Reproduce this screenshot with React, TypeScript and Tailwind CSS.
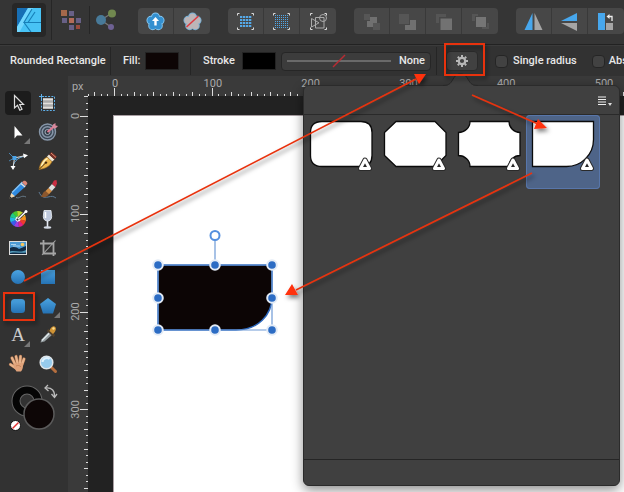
import type { ReactNode } from "react"

const STEP = 97.8
const ticks = Array.from({ length: 110 }, (_, i) => i - 5)
const labels = [0, 100, 200, 300, 400, 500]

const tickLength = (n: number) => (n % 15 === 0 ? 8 : n % 3 === 0 ? 4 : 2)
const tickPos = (n: number, zero: number) => Math.round(zero + (n * STEP) / 15) + 0.5

function Icon({ children }: { children: ReactNode }) {
  return (
    <svg className="h-6 w-[26px]" viewBox="0 0 26 24" fill="none" aria-hidden="true">
      {children}
    </svg>
  )
}

const corner = <path d="M25 18v6h-6z" fill="#777" />

const wheel = ["#f7e03b", "#f7931e", "#ef3b2d", "#e0218a", "#9b3fe0", "#3b5bea", "#22b5e8", "#1fc98a", "#46c832", "#b5dc2e"]

function wedge(i: number) {
  const a = ((i * 36 - 60) * Math.PI) / 180
  const b = (((i + 1) * 36 - 58) * Math.PI) / 180
  return `M13 12L${13 + 8 * Math.cos(a)} ${12 + 8 * Math.sin(a)}A8 8 0 0 1 ${13 + 8 * Math.cos(b)} ${12 + 8 * Math.sin(b)}z`
}

const tools: { name: string; icon: ReactNode }[] = [
  {
    name: "Move Tool",
    icon: <path d="M9.500 4.500v12.500l3-2.700 2.300 5 2.200-1-2.300-4.800h3.800z" fill="#1c1c1c" stroke="#ddd" strokeWidth="1.200" />,
  },
  {
    name: "Artboard Tool",
    icon: (
      <>
        <rect x="6.500" y="5.500" width="13" height="14" stroke="#5fb0ea" strokeDasharray="2 1.300" />
        <path d="M4 5.500h5M6.500 3v5" stroke="#5fb0ea" />
        <rect x="8" y="7" width="10" height="11" fill="#aaa" />
        <path d="M8 8.500h10M8 12.500h10M8 16.500h10" stroke="#e3dfda" strokeWidth="1.500" />
      </>
    ),
  },
  {
    name: "Node Tool",
    icon: (
      <>
        <path d="M9.500 6v12.500l2.500-3h5.500z" fill="#fff" />
        {corner}
      </>
    ),
  },
  {
    name: "Point Transform Tool",
    icon: (
      <>
        <circle cx="12.500" cy="12" r="8" fill="#3a4654" stroke="#8796a8" strokeWidth="1.400" />
        <circle cx="12.500" cy="12" r="5.300" stroke="#8796a8" strokeWidth="1.600" />
        <circle cx="12.500" cy="12" r="2.500" fill="#2c333c" stroke="#a3afbd" />
        <path d="M12.500 12l7-6" stroke="#e07a92" strokeWidth="2" />
        <path d="M17 8l1-3.500 2.500-1.500v2.500l2.500.5-2.500 2.500z" fill="#d9899c" />
      </>
    ),
  },
  {
    name: "Corner Tool",
    icon: (
      <>
        <path d="M9 9L4 4M9 9L4 12" stroke="#4b83ad" />
        <path d="M8 20c-.500-6 4-12 13-13" stroke="#5ea7dc" />
        <path d="M9.500 9l11-2.500M9.500 9L8 19" stroke="#ddd" />
        <rect x="7.500" y="7" width="4" height="4" fill="#4aa3e8" />
        <path d="M18 4.500l5 1.700-4 3zM5.500 17h5l-2.500 4z" fill="#fff" />
      </>
    ),
  },
  {
    name: "Pen Tool",
    icon: (
      <>
        <path d="M4 20.500C5 15 7 11 12 8l5 4.500c-2 4.500-6 7-13 8z" fill="#edb850" stroke="#a9711f" strokeWidth=".6" />
        <path d="M6.500 17C8 13 10 10.500 12.500 9.500" stroke="#fff0b8" strokeWidth="1.500" />
        <path d="M4.500 20l6-6" stroke="#42290c" />
        <circle cx="11" cy="13.600" r="1.200" fill="#42290c" />
        <path d="M12 7.500l2-2 5.500 5-2.300 2z" fill="#eee5d3" />
        <path d="M14 5.500L16.500 3l5.500 4.500-2.500 3z" fill="#772f25" />
        <path d="M16 4l5 4.500" stroke="#db8e75" />
      </>
    ),
  },
  {
    name: "Pencil Tool",
    icon: (
      <>
        <path d="M11 19.500c4 1.500 5-3 10-.5" stroke="#687b89" />
        <path d="M5 20l1.500-5L17 4.500l4 3.500-11 10z" fill="#2f8ae0" />
        <path d="M7 14.500L17.500 4" stroke="#83c5fa" strokeWidth="1.400" />
        <path d="M17 4.500l1.700-1.700c1.500-.8 4.300 1.500 3.500 3.200L20.500 8z" fill="#dc8878" />
        <path d="M16 5.500l4 3.500" stroke="#e8e4dc" strokeWidth="1.300" />
        <path d="M4.500 20.500l1.800-5.500 3.700 3.200z" fill="#f2d6ad" />
        <path d="M4.500 20.500l.700-2 1.300 1.200z" fill="#222" />
      </>
    ),
  },
  {
    name: "Vector Brush Tool",
    icon: (
      <>
        <path d="M4 14c2 5 5 6 9 5s5-1 8 1" stroke="#607b94" />
        <path d="M5.500 18.500c2 0 2-5 5-5.500l3.500 3c-1 3-5 4-8.500 2.500z" fill="#8c572d" />
        <path d="M10.500 13l3-3 3.500 3-3 3.200z" fill="#d08b42" />
        <path d="M13.500 10l3.500-4 3.500 3-3.700 4z" fill="#ddd" />
        <path d="M17 6l2-3.500 2.500-.5.500 3.500-1.500 3.500z" fill="#c92d42" />
      </>
    ),
  },
  {
    name: "Fill Tool",
    icon: (
      <>
        {wheel.map((c, i) => (
          <path key={c} d={wedge(i)} fill={c} />
        ))}
        <circle cx="13" cy="12" r="2.500" fill="#eee" />
        <path d="M13 12l8-7.500" stroke="#333" strokeWidth="3" />
        <path d="M12 13l9-8.500" stroke="#fff" strokeWidth="1.400" />
        <circle cx="12.500" cy="12.500" r="1.500" fill="#333" stroke="#fff" />
        <circle cx="21" cy="4.500" r="1.500" fill="#fff" />
      </>
    ),
  },
  {
    name: "Transparency Tool",
    icon: (
      <>
        <path d="M9 3.500h7l.700 6c0 3-2 4.500-4.200 4.500s-4.200-1.500-4.200-4.500z" fill="#bfc9dc" stroke="#eef2f8" strokeWidth=".8" />
        <path d="M10.500 5v6" stroke="#fff" strokeWidth="1.500" />
        <path d="M12.500 14v6" stroke="#e6ebf3" strokeWidth="1.600" />
        <ellipse cx="12.500" cy="20.500" rx="3.800" ry="1.200" fill="#d4dae5" />
      </>
    ),
  },
  {
    name: "Place Image Tool",
    icon: (
      <>
        <rect x="4.500" y="5.500" width="17" height="13" fill="#4c9bd6" stroke="#ddd" />
        <path d="M5 12c3-2 7-1 9 1l7-3v8H5z" fill="#102b46" />
        <path d="M5 15.500c5-1.500 10 2 16-1.500v2.500c-6 1-9-1-16 .5z" fill="#519aba" />
        <circle cx="17.500" cy="8.500" r="1.800" fill="#f7c65a" />
        <path d="M6 8.500h5M8 10h7" stroke="#a8d3ef" />
      </>
    ),
  },
  {
    name: "Crop Tool",
    icon: (
      <>
        <path d="M8.500 4v13.500H21M5 7.500h13.500V20" stroke="#a5a5a5" strokeWidth="1.800" />
        <path d="M20.500 4.500L7 19" stroke="#a5a5a5" strokeWidth="1.100" />
      </>
    ),
  },
  { name: "Ellipse Tool", icon: <circle cx="13" cy="12" r="7" fill="url(#blue)" /> },
  { name: "Rectangle Tool", icon: <rect x="6" y="5" width="14" height="14" fill="url(#blue)" /> },
  { name: "Rounded Rectangle Tool", icon: <rect x="6" y="5" width="14" height="14" rx="3.500" fill="url(#blue)" /> },
  {
    name: "Pentagon Tool",
    icon: (
      <>
        <path d="M13 4l8 6-3 9.500H8L5 10z" fill="url(#blue)" />
        {corner}
      </>
    ),
  },
  {
    name: "Artistic Text Tool",
    icon: (
      <>
        <text x="13" y="18" textAnchor="middle" fontSize="19" fontFamily="'Liberation Serif', serif" fill="#ccc">
          A
        </text>
        {corner}
      </>
    ),
  },
  {
    name: "Colour Picker Tool",
    icon: (
      <>
        <path d="M5.500 19.500l1-3 7.500-8 3.500 3-8 7z" fill="#939b9e" />
        <path d="M7 17.500l7.500-7.500" stroke="#e5ecef" strokeWidth="1.300" />
        <path d="M12.500 7l7 6" stroke="#50402d" strokeWidth="2.500" />
        <path d="M14.500 8c.500-3 3-5.500 5-4.500 2.500 1 1.500 5-1.500 7.500z" fill="#cf9335" />
        <circle cx="18.500" cy="5.500" r="1.200" fill="#ffe091" />
      </>
    ),
  },
  {
    name: "View Tool",
    icon: (
      <>
        <g stroke="#9e6846" strokeWidth="3.300" strokeLinecap="round">
          <path d="M10 12L7 6M12.500 11L11 4.500M15 11l.5-6.500M17 12.500l2-5.500M10 15.500l-4.500-3" />
        </g>
        <g stroke="#e9b48c" strokeWidth="2.300" strokeLinecap="round">
          <path d="M10 12L7 6M12.500 11L11 4.500M15 11l.5-6.500M17 12.500l2-5.500M10 15.500l-4.500-3" />
        </g>
        <path d="M8.500 11.500l9.500-.5c.500 4-.5 6.500-2 8.500h-4.500c-1-2-3-3-3-8z" fill="#dfa27a" />
        <path d="M11 14c2-1 4-.5 5 1" stroke="#b8774f" strokeWidth=".7" />
      </>
    ),
  },
  {
    name: "Zoom Tool",
    icon: (
      <>
        <path d="M16 15l4.500 4.500" stroke="#b56e3e" strokeWidth="3" strokeLinecap="round" />
        <circle cx="11.500" cy="10.500" r="6.300" fill="#96cbed" stroke="#e0e6ea" strokeWidth="1.500" />
        <path d="M7.500 10c.500-4 5-5 7-3" stroke="#def2ff" strokeWidth="2" />
      </>
    ),
  },
]

const snap = <path d="M4.500 6.500v-2h2M18.500 4.500h2v2M20.500 18.500v2h-2M6.500 20.500h-2v-2" stroke="#ddd" />

const petals = [0, 1, 2, 3, 4].map((i) => {
  const a = ((i * 72 - 90) * Math.PI) / 180
  return { x: 12.5 + 4.8 * Math.cos(a), y: 12.8 + 4.8 * Math.sin(a) }
})

function Flower({ fill, stroke }: { fill: string; stroke: string }) {
  return (
    <>
      {petals.map((p, i) => (
        <circle key={i} cx={p.x} cy={p.y} r="3.600" fill={fill} stroke={stroke} strokeWidth="1.800" />
      ))}
      {petals.map((p, i) => (
        <circle key={i} cx={p.x} cy={p.y} r="3.500" fill={fill} />
      ))}
      <circle cx="12.500" cy="12.800" r="5.500" fill={fill} />
    </>
  )
}

const groups: { name: string; icon: ReactNode }[][] = [
  [
    {
      name: "Insert inside",
      icon: (
        <>
          <Flower fill="#3490d0" stroke="#86c4ec" />
          <path d="M12.500 8l3.500 4h-2.300v4.500h-2.400V12H9z" fill="#fff" />
        </>
      ),
    },
    {
      name: "Insert off",
      icon: (
        <>
          <Flower fill="#bcb5b8" stroke="#75afd4" />
          <path d="M6.500 18L18.500 7" stroke="#df3940" strokeWidth="1.500" />
        </>
      ),
    },
  ],
  [
    {
      name: "Show grid",
      icon: (
        <>
          {snap}
          {[0, 1, 2, 3].map((r) => (
            <path key={r} d={`M7 ${8 + r * 3}h11.500`} stroke="#55a9e8" strokeWidth="2.200" strokeDasharray="2.300 .7" />
          ))}
        </>
      ),
    },
    {
      name: "Snap to grid",
      icon: (
        <>
          {snap}
          {[0, 1, 2, 3, 4, 5, 6].map((r) => (
            <path key={r} d={`M6 ${6.5 + r * 2}h13`} stroke="#50a7e8" strokeDasharray="1 1" />
          ))}
        </>
      ),
    },
    {
      name: "Snapping",
      icon: (
        <>
          {snap}
          <path d="M9.500 8.500H18V19H9.500z" stroke="#aaa" />
          <circle cx="17" cy="9" r="3.500" stroke="#aaa" />
          <path d="M5.500 9.500v8.500l7.500-4.200z" stroke="#aaa" />
        </>
      ),
    },
  ],
  [
    {
      name: "Move to back",
      icon: (
        <>
          <path d="M5 5h6v6H5zM14 14h7v7h-7z" fill="#565656" />
          <path d="M11 8h7v6h-4v4H8v-6h3z" fill="#707070" />
        </>
      ),
    },
    {
      name: "Back one",
      icon: (
        <>
          <path d="M4 5h10v10H4z" fill="#565656" />
          <path d="M15 11h6v10H10v-5h5z" fill="#707070" />
        </>
      ),
    },
    {
      name: "Forward one",
      icon: (
        <>
          <path d="M5 5h10v3H8v6H5z" fill="#555" />
          <path d="M9.500 9.500H21V21H9.500z" fill="#727272" />
        </>
      ),
    },
    {
      name: "Move to front",
      icon: (
        <>
          <path d="M4 5h6v2H7v5H4zM19 14h2v6h-7v-2h5z" fill="#555" />
          <path d="M8 8h10v10H8z" fill="#757575" />
        </>
      ),
    },
  ],
  [
    {
      name: "Flip horizontal",
      icon: (
        <>
          <path d="M11.500 4v17H3.500z" fill="#47a7ed" />
          <path d="M13.500 4v17h8z" fill="#a5a5a5" />
        </>
      ),
    },
    {
      name: "Flip vertical",
      icon: (
        <>
          <path d="M4 12l16-8v8z" fill="#47a7ed" />
          <path d="M4 14h16v8z" fill="#a5a5a5" />
        </>
      ),
    },
    {
      name: "Rotate anticlockwise",
      icon: (
        <>
          <path d="M4 4h7v17H4z" fill="#47a7ed" />
          <path d="M12 14h7v7h-7z" fill="#a5a5a5" />
          <path d="M14 7.500h4V12" stroke="#eee" strokeWidth="1.300" />
          <path d="M15.500 5v5L12.500 7.500z" fill="#eee" />
        </>
      ),
    },
  ],
]

const presets = [
  { name: "Rounded", d: "M18 6.500h39q11 0 11 11v23q0 11-11 11H18q-11.500 0-11.500-11v-23q0-11 11.500-11z" },
  { name: "Straight", d: "M18 6.500h39l11 11v23l-11 11H18l-11.500-11v-23z" },
  { name: "Concave", d: "M18 6.500h39a11 11 0 0 0 11 11v23a11 11 0 0 0-11 11H18a11.500 11 0 0 0-11.500-11v-23a11.500 11 0 0 0 11.500-11z" },
  { name: "Single corner", d: "M6.500 6.500h61v18c0 15-12 27-27 27h-34z" },
]

const handles = [
  [6, 35],
  [63, 35],
  [120, 35],
  [6, 68],
  [120, 68],
  [6, 100],
  [63, 100],
  [120, 100],
]

const Divider = () => <div className="h-7 w-px shrink-0 bg-[#252525]" />

function TopBar() {
  return (
    <header className="flex h-[45px] shrink-0 overflow-hidden border-b border-[#222] bg-[#353535]">
      <div className="flex h-10 w-[138px] shrink-0 items-center pl-3">
        <button aria-label="Designer Persona" className="flex size-[34px] shrink-0 items-center justify-center rounded bg-[#272727]">
          <svg className="size-6" viewBox="0 0 24 24">
            <path d="M0 0h24v24H0z" fill="#48c3f5" />
            <path d="M0 0h11L0 19z" fill="#176fb5" />
            <path d="M0 19L11 0h5L2.500 24H0z" fill="#72d7ff" />
            <path d="M15 1L7 14.500h17M7 14.500L14 24M11 14.500L18 4" fill="none" stroke="#1780b9" strokeWidth="1.200" />
          </svg>
        </button>
        <div className="ml-[5px] h-10 w-px shrink-0 bg-[#262626]" />
        <button aria-label="Pixel Persona" className="flex w-[37px] shrink-0 justify-center">
          <svg className="size-5" viewBox="0 0 20 20">
            <path d="M0 0h6v6H0z" fill="#a5684b" />
            <path d="M8 1h5v5H8zM1 8h5v5H1zM15 8h5v5h-5zM8 15h5v5H8z" fill="#686086" />
            <path d="M8 8h5v5H8z" fill="#b36c59" />
            <path d="M15 15h4v4h-4z" fill="#9a4a3d" />
          </svg>
        </button>
        <div className="h-7 w-px shrink-0 bg-[#262626]" />
        <button aria-label="Export Persona" className="ml-[6px] shrink-0">
          <svg className="h-[22px] w-[21px]" viewBox="0 0 21 22">
            <path d="M16 4L5 11l10 7" fill="none" stroke="#777" strokeWidth="1.300" />
            <circle cx="5" cy="11" r="5" fill="#487a99" />
            <circle cx="16" cy="4.500" r="4" fill="#71884f" />
            <circle cx="15" cy="18" r="3" fill="#6e6193" />
          </svg>
        </button>
      </div>
      <div className="flex gap-[18px] pt-2">
        {groups.map((group, i) => (
          <div key={i} className="flex h-[26px] shrink-0 overflow-hidden rounded-sm bg-[#474747]">
            {group.map((b) => (
              <button
                key={b.name}
                aria-label={b.name}
                className="flex w-9 items-center justify-center border-r border-[#393939] last:border-r-0"
              >
                <svg className="size-[25px]" viewBox="0 0 25 25" fill="none">
                  {b.icon}
                </svg>
              </button>
            ))}
          </div>
        ))}
      </div>
    </header>
  )
}

function ContextBar() {
  return (
    <div className="flex h-[31px] shrink-0 items-center overflow-hidden border-t border-[#3b3b3b] bg-[#323232] pl-[10px] text-[11px] font-medium whitespace-nowrap text-[#e8e8e8]">
      <span className="w-[100px] shrink-0">Rounded Rectangle</span>
      <Divider />
      <span className="ml-3 w-[22px] shrink-0">Fill:</span>
      <button aria-label="Fill" className="h-[18px] w-[34px] shrink-0 border border-[#232323] bg-[#0d0505]" />
      <div className="ml-[11px]">
        <Divider />
      </div>
      <span className="ml-3 w-[39px] shrink-0">Stroke</span>
      <button aria-label="Stroke" className="h-[18px] w-[34px] shrink-0 border border-[#232323] bg-black" />
      <button className="ml-[5px] flex h-[19px] w-[150px] shrink-0 items-center justify-between rounded-sm border border-[#262626] bg-[#3c3c3c] px-[5px]">
        <svg className="h-4 w-[104px]" viewBox="0 0 104 16">
          <path d="M0 8h104" stroke="#6a6a6a" strokeWidth="2" />
          <path d="M46 14L58 2" stroke="#b92b32" strokeWidth="1.500" />
        </svg>
        None
      </button>
      <div className="ml-[5px]">
        <Divider />
      </div>
      <button
        aria-label="Preset settings"
        className="ml-[9px] flex h-5 w-8 shrink-0 items-center justify-center rounded-sm border border-[#2a2a2a] bg-[#414141]"
      >
        <svg className="size-3" viewBox="0 0 12 12" fill="none" stroke="#b8b8b8">
          <circle cx="6" cy="6" r="3.200" strokeWidth="2.200" />
          <path d="M6 0v2M6 10v2M0 6h2M10 6h2M1.800 1.800l1.400 1.400M8.800 8.800l1.400 1.400M10.200 1.800L8.800 3.200M3.200 8.800l-1.400 1.400" strokeWidth="2" />
        </svg>
      </button>
      <label className="ml-[17px] flex shrink-0 items-center gap-[5px]">
        <input type="checkbox" className="size-[13px] appearance-none rounded-sm border border-[#252525] bg-[#424242]" />
        Single radius
      </label>
      <label className="ml-[15px] flex shrink-0 items-center gap-1">
        <input type="checkbox" className="size-[13px] appearance-none rounded-sm border border-[#252525] bg-[#424242]" />
        Abs
      </label>
    </div>
  )
}

function ToolPanel() {
  return (
    <nav className="w-[68px] shrink-0 bg-[#323232] pt-[15px] pl-[5px]">
      <div className="grid grid-cols-[26px_26px] gap-x-1 gap-y-[5px]">
        {tools.map((tool, i) => (
          <button key={tool.name} aria-label={tool.name} className={i === 0 ? "h-6 rounded bg-[#1c1c1c]" : "h-6"}>
            <Icon>{tool.icon}</Icon>
          </button>
        ))}
      </div>
      <button aria-label="Stroke and fill colours" className="mt-2 block">
        <svg className="h-[52px] w-[58px]" viewBox="0 0 58 52" fill="none">
          <circle cx="22" cy="17" r="11" stroke="#666" strokeWidth="9" />
          <circle cx="22" cy="17" r="11" stroke="#050505" strokeWidth="7" />
          <circle cx="34" cy="30" r="15" fill="#0d0606" stroke="#5b5b5b" strokeWidth="1.500" />
          <circle cx="10.500" cy="41.500" r="5" fill="#fff" stroke="#111" />
          <path d="M7.500 44.500l6-6" stroke="#e03030" strokeWidth="1.500" />
          <path d="M41 4c6-.5 9 3 8.500 9" stroke="#bbb" strokeWidth="1.300" />
          <path d="M43 1l-3 3 3.500 3M46.500 10l3 3.500 2.500-3.500" stroke="#bbb" strokeWidth="1.300" />
        </svg>
      </button>
    </nav>
  )
}

function Workspace() {
  return (
    <main className="grid min-w-0 flex-1 grid-cols-[20px_1fr] grid-rows-[20px_1fr] bg-[#222] text-[11px] text-[#aaa]">
      <div className="bg-[#3a3a3a] pt-[3px] pl-1 leading-4">px</div>
      <svg className="h-5 w-full bg-[#3a3a3a]" fill="#aaa">
        {ticks.map((n) => (
          <path key={n} d={`M${tickPos(n, 26)} 20v-${tickLength(n)}`} stroke="#ddd" />
        ))}
        {labels.map((n) => (
          <text key={n} x={27 + (n * STEP) / 100} y="11" textAnchor="middle">
            {n}
          </text>
        ))}
      </svg>
      <svg className="h-full w-5 bg-[#3a3a3a]" fill="#aaa">
        {ticks.map((n) => (
          <path key={n} d={`M20 ${tickPos(n, 20)}h-${tickLength(n)}`} stroke="#ddd" />
        ))}
        {labels.slice(0, 4).map((n) => (
          <text key={n} transform={`translate(11 ${20 + (n * STEP) / 100}) rotate(-90)`} textAnchor="middle">
            {n}
          </text>
        ))}
      </svg>
      <div className="overflow-hidden pt-[19px] pl-[25px]">
        <div className="relative h-full border-t border-l border-[#a99fa3] bg-white">
          <svg className="absolute top-[114px] left-[38px] h-[107px] w-[127px]" viewBox="0 0 127 107" fill="none">
            <path d="M6 35h114v32c0 18-14 33-36 33H6z" fill="#0c0505" stroke="#2d68bd" strokeWidth="1.500" />
            <path d="M6 35h114v65H6zM63 35V8" stroke="#6e9ad6" strokeWidth="1.200" />
            <circle cx="63" cy="5.500" r="4.500" fill="#fff" stroke="#5590df" strokeWidth="2" />
            {handles.map(([x, y]) => (
              <circle key={`${x}-${y}`} cx={x} cy={y} r="4.800" fill="#2c6cc4" stroke="#e3ebf6" strokeWidth="2" />
            ))}
          </svg>
        </div>
      </div>
    </main>
  )
}

function PresetPopover() {
  return (
    <section
      aria-label="Shape presets"
      className="absolute top-[85px] left-[303px] flex h-[401px] w-[317px] flex-col rounded-md border border-[#2b2b2b] bg-[#404040] shadow-[0_4px_12px_rgba(0,0,0,0.45)]"
    >
      <svg className="absolute -top-[13px] left-[139px] h-[14px] w-9" viewBox="0 0 36 14">
        <path d="M0 14v-1c7 0 8-3 11-8 3-5 10-5 13 0 3 5 4 8 11 8v1z" fill="#404040" />
        <path d="M0 12.500c7 0 8-3 11-8 3-5 10-5 13 0 3 5 4 8 11 8" fill="none" stroke="#282828" />
      </svg>
      <div className="flex h-[29px] shrink-0 items-start justify-end border-b border-[#2a2a2a] pt-[10px] pr-[7px]">
        <button aria-label="Preset menu">
          <svg className="h-[10px] w-[14px]" viewBox="0 0 14 10">
            <path d="M0 1h8M0 3.500h8M0 6h8M0 8.500h8" stroke="#ededed" strokeWidth="1.200" />
            <path d="M10 7h4l-2 3z" fill="#ddd" />
          </svg>
        </button>
      </div>
      <div className="flex flex-1 items-start">
        {presets.map((p, i) => (
          <button
            key={p.name}
            aria-label={p.name}
            className={i === 3 ? "size-[74px] rounded-sm bg-[#4e6488] ring-1 ring-[#5876aa] ring-inset" : "size-[74px]"}
          >
            <svg className="size-[74px]" viewBox="0 0 74 74">
              <path d={p.d} fill="#fff" stroke="#0b0b0b" strokeWidth="1.300" />
              <path
                d="M61 45l4.500 8.500h-9z"
                fill="#333"
                stroke="#2a2a2a"
                strokeWidth="5"
                strokeLinejoin="round"
              />
              <path d="M61 45l4.500 8.500h-9z" fill="#2a2a2a" stroke="#fff" strokeWidth="3" strokeLinejoin="round" />
            </svg>
          </button>
        ))}
      </div>
      <div className="h-[26px] shrink-0 border-t border-[#252525]" />
    </section>
  )
}

// red callouts drawn over the whole window
function Annotations() {
  return (
    <svg className="pointer-events-none absolute top-0 left-0 h-[492px] w-[624px]" viewBox="0 0 624 492" fill="none">
      <defs>
        <linearGradient id="blue" x1="0" y1="0" x2="0" y2="1">
          <stop stopColor="#4ba4e2" />
          <stop offset="1" stopColor="#2572b4" />
        </linearGradient>
        <filter id="drop" x="-20%" y="-20%" width="140%" height="140%">
          <feDropShadow dx="2" dy="3" stdDeviation="2" floodOpacity="0.5" />
        </filter>
      </defs>
      <g stroke="#e8330f" strokeWidth="2" filter="url(#drop)">
        <path d="M24 281L416 79M472 95l66 29M532 173L296 290" strokeWidth="1.700" />
        <path d="M445 44h39v31h-39zM4 293h30v27H4z" />
        <path d="M426 74l-7 10-5-10zM547 128l-13 1 4-10zM285 295l7-11 6 11z" fill="#ff3010" stroke="none" />
      </g>
    </svg>
  )
}

export default function App() {
  return (
    <div className="relative flex h-screen flex-col overflow-hidden bg-[#323232] font-['Roboto',sans-serif]">
      <TopBar />
      <ContextBar />
      <div className="flex min-h-0 flex-1">
        <ToolPanel />
        <Workspace />
      </div>
      <PresetPopover />
      <Annotations />
    </div>
  )
}
